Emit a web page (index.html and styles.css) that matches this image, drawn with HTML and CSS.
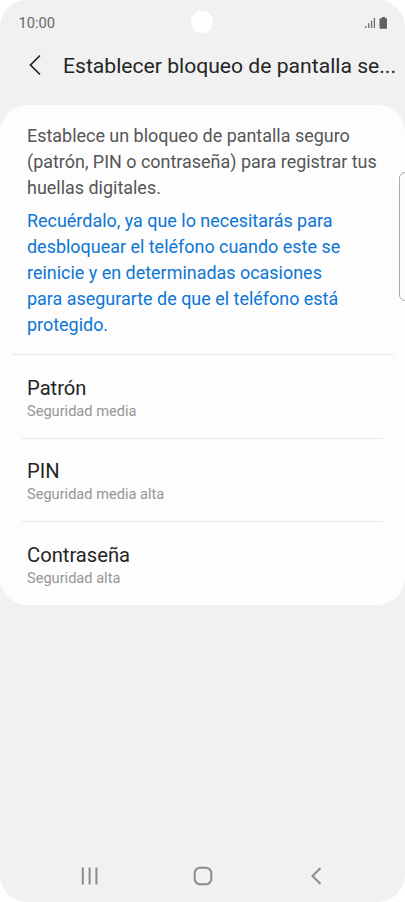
FILE: index.html
```html
<!DOCTYPE html>
<html lang="es">
<head>
<meta charset="utf-8">
<title>Bloqueo de pantalla</title>
<link rel="stylesheet" href="styles.css">
</head>
<body>
<div class="phone">
  <header class="status">
    <span class="time">10:00</span>
    <span class="camera"></span>
    <svg class="signals" width="25" height="14" viewBox="0 0 25 14">
      <path d="M1.700 10v2M4.700 7.200v4.800M7.600 4.700v7.300M10.400 2v10" stroke="#6c6c6c" stroke-width="1.300"/>
      <path d="M16 2.200h2V1h3v1.200h1.300q.700 0 .700.700v9.100q0 .700-.700.700h-6.100q-.700 0-.700-.700v-9.100q0-.700.500-.700z" fill="#606060"/>
    </svg>
  </header>
  <div class="titlebar">
    <svg class="back" width="14" height="22" viewBox="0 0 14 22"><path d="M12 1.500 2.500 11l9.500 9.500" fill="none" stroke="#252525" stroke-width="1.700"/></svg>
    <h1>Establecer bloqueo de pantalla se...</h1>
  </div>
  <main class="card">
    <div class="intro">
      <p>Establece un bloqueo de pantalla seguro<br>(patrón, PIN o contraseña) para registrar tus<br>huellas digitales.</p>
      <p class="notice">Recuérdalo, ya que lo necesitarás para<br>desbloquear el teléfono cuando este se<br>reinicie y en determinadas ocasiones<br>para asegurarte de que el teléfono está<br>protegido.</p>
    </div>
    <ul class="options">
      <li><strong>Patrón</strong><span>Seguridad media</span></li>
      <li><strong>PIN</strong><span>Seguridad media alta</span></li>
      <li><strong>Contraseña</strong><span>Seguridad alta</span></li>
    </ul>
  </main>
  <nav class="nav">
    <svg width="20" height="20" viewBox="0 0 20 20"><path d="M2.800 1.500v17M9.600 1.500v17M16.400 1.500v17"/></svg>
    <svg width="20" height="20" viewBox="0 0 20 20"><rect x="1.700" y="1.700" width="16.600" height="16.600" rx="5.500"/></svg>
    <svg width="20" height="20" viewBox="0 0 20 20"><path d="M14.500 2 6.500 10l8 8"/></svg>
  </nav>
  <span class="edge"></span>
</div>
</body>
</html>
```
FILE: styles.css
```css
* { box-sizing: border-box; }
body { margin: 0; background: #fff; font-family: Roboto, sans-serif; }
.phone { position: relative; width: 405px; height: 902px; display: flex; flex-direction: column; background: #f1f1f1; border-radius: 27px; overflow: hidden; }
.status { position: relative; height: 45px; padding: 1px 16.500px 0 18.500px; display: flex; align-items: center; justify-content: space-between; flex: none; }
.time { font-size: 14.700px; color: #686868; }
.camera { position: absolute; left: 191px; top: 11px; width: 22px; height: 22px; border-radius: 50%; background: #fff; }
.titlebar { height: 60px; padding: 0 0 20px 28px; display: flex; align-items: center; flex: none; }
.back { flex: none; margin-right: 21px; }
h1 { margin: 2px 0 0; font-size: 21.130px; font-weight: 400; line-height: 28px; color: #252525; white-space: nowrap; }
.card { height: 500px; flex: none; background: #fdfdfd; border-radius: 27px; }
.intro { height: 250px; margin: 0 11px 0 12px; padding: 18px 0 0 15px; border-bottom: 1px solid #e8e8e8; font-size: 17.950px; line-height: 26px; color: #555; white-space: nowrap; }
.intro p { margin: 0; }
.intro .notice { margin-top: 7px; color: #0c76d6; }
.options { list-style: none; margin: 0; padding: 0 22px; }
.options li { height: 83.500px; padding: 18.500px 5px 0; display: flex; flex-direction: column; border-bottom: 1px solid #e8e8e8; }
.options li:last-child { border: 0; }
.options strong { font-size: 20.200px; line-height: 28px; font-weight: 400; color: #252525; }
.options span { font-size: 14.600px; line-height: 19px; color: #969696; }
.nav { height: 54px; margin-top: auto; padding: 1px 79px 0 80px; display: flex; align-items: center; justify-content: space-between; }
.nav svg { position: relative; top: .5px; fill: none; stroke: #8b8b8b; stroke-width: 2; }
.edge { position: absolute; left: 399px; top: 172px; width: 12px; height: 129px; border: 1px solid #aaa; border-radius: 6px; background: #fbfbfb; }
```
